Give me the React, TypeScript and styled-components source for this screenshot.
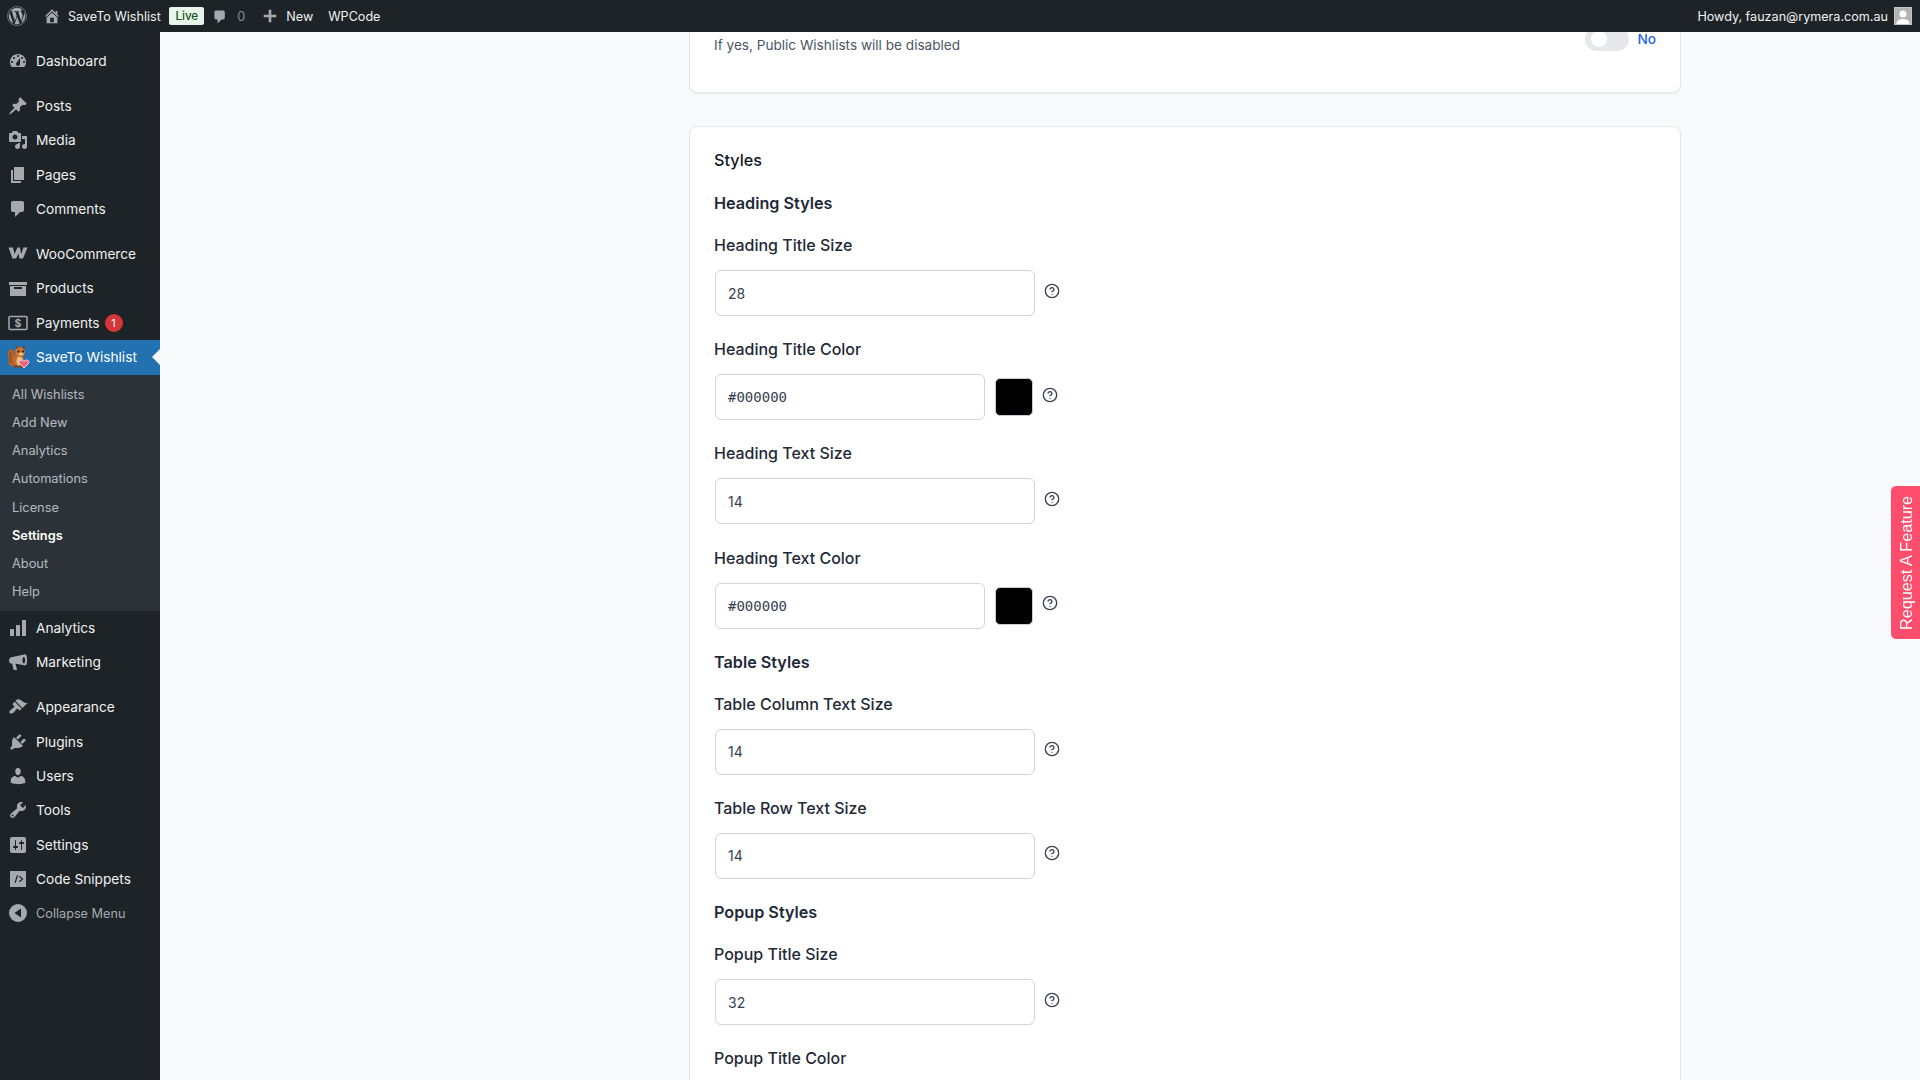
import { ReactNode } from 'react';
import styled, { createGlobalStyle } from 'styled-components';
import { FaWordpress } from 'react-icons/fa';
import { CircleHelp } from 'lucide-react';

const GlobalStyle = createGlobalStyle`
  html, body {
    margin: 0;
    padding: 0;
    height: 100%;
    overflow: hidden;
    background: #f9fafb;
    font-family: Inter, "Liberation Sans", sans-serif;
  }
  * {
    box-sizing: border-box;
  }
`;

const Page = styled.div`
  display: flex;
  flex-direction: column;
  height: 1080px;
  overflow: hidden;
`;

const AdminBar = styled.header`
  height: 32px;
  flex: none;
  background: #1d2327;
  color: #f0f0f1;
  display: flex;
  align-items: center;
  font-size: 12.6px;
  position: relative;
  z-index: 2;
`;

const BarLogo = styled.span`
  width: 20px;
  height: 20px;
  margin-left: 7px;
  color: #a7aaad;
  display: flex;
`;

const BarIcon = styled.span<{ $left: number; $size?: number }>`
  margin-left: ${(props) => props.$left}px;
  width: ${(props) => props.$size || 16}px;
  height: ${(props) => props.$size || 16}px;
  color: #a7aaad;
  display: flex;
  flex: none;
`;

const BarText = styled.span<{ $left: number; $muted?: boolean }>`
  margin-left: ${(props) => props.$left}px;
  color: ${(props) => (props.$muted ? '#8c8f94' : '#f0f0f1')};
  white-space: nowrap;
`;

const LiveBadge = styled.span`
  margin-left: 8.5px;
  width: 35px;
  height: 18px;
  background: #e8f5e9;
  color: #14531a;
  border-radius: 2px;
  font-size: 11.6px;
  font-weight: 500;
  display: flex;
  align-items: center;
  justify-content: center;
`;

const BarRight = styled.div`
  margin-left: auto;
  display: flex;
  align-items: center;
  gap: 6px;
  padding-right: 8px;
`;

const Avatar = styled.span`
  width: 18px;
  height: 18px;
  display: flex;
  background: #b4b4b4;
  border: 1px solid #c3c4c7;
  overflow: hidden;
`;

const Body = styled.div`
  flex: 1;
  display: flex;
  min-height: 0;
`;

const Sidebar = styled.nav`
  width: 160px;
  flex: none;
  background: #1d2327;
  padding-top: 12px;
`;

const MenuItem = styled.a<{ $active?: boolean; $gap?: number; $muted?: boolean }>`
  height: 34.3px;
  margin-top: ${(props) => props.$gap || 0}px;
  padding-bottom: 1px;
  display: flex;
  align-items: center;
  position: relative;
  font-size: ${(props) => (props.$muted ? 12.7 : 13.7)}px;
  color: ${(props) => (props.$active ? '#fff' : props.$muted ? '#a7aaad' : '#f0f0f1')};
  background: ${(props) => (props.$active ? '#2271b1' : 'transparent')};

  ${(props) =>
    props.$active &&
    `&::after {
      content: '';
      position: absolute;
      right: 0;
      top: 9px;
      border: 8px solid transparent;
      border-right-color: #f9fafb;
    }`}
`;

const MenuIcon = styled.span`
  width: 36px;
  flex: none;
  display: flex;
  justify-content: center;
  color: #a7aaad;
`;

const CountBadge = styled.span`
  width: 18px;
  height: 18px;
  margin-left: 5px;
  border-radius: 50%;
  background: #d63638;
  color: #fff;
  font-size: 11px;
  display: flex;
  align-items: center;
  justify-content: center;
`;

const SubMenu = styled.div`
  background: #2c3338;
  padding: 6px 0 5px;
`;

const SubItem = styled.a<{ $current?: boolean }>`
  height: 28.2px;
  padding-left: 12px;
  padding-bottom: 1px;
  display: flex;
  align-items: center;
  font-size: 12.8px;
  color: ${(props) => (props.$current ? '#fff' : 'rgba(240, 246, 252, 0.7)')};
  font-weight: ${(props) => (props.$current ? 600 : 400)};
`;

const Main = styled.main`
  flex: 1;
  min-width: 0;
  overflow: hidden;
  padding-left: 529px;
`;

const Card = styled.section`
  width: 992px;
  background: #fff;
  border: 1px solid #e5e7eb;
  border-radius: 8px;
  box-shadow: 0 1px 2px rgba(0, 0, 0, 0.05);
`;

const TopCard = styled(Card)`
  height: 81px;
  margin-top: -20px;
  margin-bottom: 33px;
  padding: 21px 24px 0;
  display: flex;
  justify-content: space-between;
`;

const Hint = styled.p`
  margin: 0;
  font-size: 13.6px;
  line-height: 22px;
  color: #4b5563;
`;

const ToggleGroup = styled.div`
  display: flex;
  align-items: center;
  gap: 8px;
  height: 24px;
  margin-top: -7px;
`;

const ToggleTrack = styled.span`
  width: 44px;
  height: 24px;
  border-radius: 12px;
  background: #e5e7eb;
  display: flex;
  align-items: center;
  padding-left: 6px;
`;

const ToggleKnob = styled.span`
  width: 16px;
  height: 16px;
  border-radius: 50%;
  background: #fff;
`;

const ToggleLabel = styled.span`
  font-size: 13.7px;
  font-weight: 500;
  color: #2563eb;
`;

const StylesCard = styled(Card)`
  padding: 23px 24px 60px;
`;

const CardTitle = styled.h2`
  margin: 0 0 23px;
  font-size: 16.2px;
  line-height: 20px;
  font-weight: 500;
  color: #111827;
`;

const SectionTitle = styled.h3`
  margin: 0 0 22px;
  font-size: 16.2px;
  line-height: 20px;
  font-weight: 600;
  color: #1f2937;
`;

const Field = styled.div`
  margin-bottom: 23.2px;
`;

const FieldLabel = styled.label`
  display: block;
  margin-bottom: 15px;
  font-size: 16px;
  line-height: 20px;
  font-weight: 500;
  color: #1f2937;
`;

const FieldRow = styled.div`
  display: flex;
  align-items: center;
`;

const TextInput = styled.input<{ $mono?: boolean }>`
  width: ${(props) => (props.$mono ? 270 : 320)}px;
  height: 46px;
  margin-left: 1px;
  padding: 0 12px;
  background: #fff;
  border: 1px solid #d1d5db;
  border-radius: 6px;
  outline: none;
  color: #374151;
  font-size: 14px;
  font-family: ${(props) =>
    props.$mono ? '"DejaVu Sans Mono", monospace' : 'Inter, sans-serif'};
`;

const Swatch = styled.span`
  width: 38px;
  height: 38px;
  margin-left: 10px;
  background: #000;
  border: 1px solid #c8ccd4;
  border-radius: 5px;
  flex: none;
`;

const HelpIcon = styled(CircleHelp)`
  width: 16px;
  height: 16px;
  margin-left: 9px;
  margin-top: -5px;
  color: #374151;
  flex: none;
`;

const FeatureTab = styled.a`
  position: fixed;
  right: 0;
  top: 486px;
  width: 29px;
  height: 153px;
  padding-right: 2px;
  background: #ff4d6d;
  color: #fff;
  border-radius: 0 5px 5px 0;
  font-family: "Liberation Sans", Arial, sans-serif;
  font-size: 16.2px;
  display: flex;
  align-items: center;
  justify-content: center;
  writing-mode: vertical-rl;
  transform: rotate(180deg);
`;

const Dash = ({ d, size = 20 }: { d: string; size?: number }) => (
  <svg width={size} height={size} viewBox="0 0 20 20" fill="currentColor">
    <path fillRule="evenodd" d={d} />
  </svg>
);

const icons: Record<string, string> = {
  home: 'M16 8.5l1.53 1.53-1.06 1.06L10 4.62l-6.47 6.47-1.06-1.06L10 2.5l4 4v-2h2v4zm-6-2.46l6 5.99V18H4v-5.97zM12 17v-5H8v5h4z',
  dashboard:
    'M3.76 16h12.48c1.1-1.37 1.76-3.11 1.76-5 0-4.42-3.58-8-8-8s-8 3.58-8 8c0 1.89.66 3.63 1.76 5zM10 4c.55 0 1 .45 1 1s-.45 1-1 1-1-.45-1-1 .45-1 1-1zM6 6c.55 0 1 .45 1 1s-.45 1-1 1-1-.45-1-1 .45-1 1-1zm8 0c.55 0 1 .45 1 1s-.45 1-1 1-1-.45-1-1 .45-1 1-1zm-5.37 5.55L12 7v6c0 1.1-.9 2-2 2s-2-.9-2-2c0-.57.24-1.08.63-1.45zM4 10c.55 0 1 .45 1 1s-.45 1-1 1-1-.45-1-1 .45-1 1-1zm12 0c.55 0 1 .45 1 1s-.45 1-1 1-1-.45-1-1 .45-1 1-1z',
  pin: 'M10.44 3.02l1.82-1.82 6.36 6.35-1.83 1.82c-1.05-.68-2.48-.57-3.41.36l-.75.75c-.92.93-1.04 2.35-.35 3.41l-1.83 1.82-2.41-2.41-2.8 2.79c-.42.42-3.38 2.71-3.8 2.29s1.86-3.39 2.28-3.81l2.79-2.79L4.1 9.36l1.83-1.82c1.05.69 2.48.57 3.41-.36l.75-.75c.93-.92 1.05-2.35.35-3.41z',
  media:
    'M13 11V4c0-.55-.45-1-1-1h-1.67L9 1H5L3.67 3H2c-.55 0-1 .45-1 1v7c0 .55.45 1 1 1h10c.55 0 1-.45 1-1zM7 4.5c1.38 0 2.5 1.12 2.5 2.5S8.38 9.5 7 9.5 4.5 8.38 4.5 7 5.62 4.5 7 4.5zM14 6h5v10.5c0 1.38-1.12 2.5-2.5 2.5S14 17.88 14 16.5s1.12-2.5 2.5-2.5c.17 0 .34.02.5.05V9h-3V6zm-4 8.05V13h2v3.5c0 1.38-1.12 2.5-2.5 2.5S7 17.88 7 16.5 8.12 14 9.5 14c.17 0 .34.02.5.05z',
  pages: 'M6 15V2h10v13H6zm-1 1h8v2H3V5h2v11z',
  comment:
    'M5 2h9c1.1 0 2 .9 2 2v7c0 1.1-.9 2-2 2h-2l-5 5v-5H5c-1.1 0-2-.9-2-2V4c0-1.1.9-2 2-2z',
  plus: 'M17 8.5v3h-5.5V17h-3v-5.5H3v-3h5.5V3h3v5.5H17z',
  woo: 'M.5 3.5H5L6.500 10l3-6.500H12l1 6.500 2.500-6.500h4L15 14.500h-3.500l-1-5-2.500 5H4.500z',
  archive: 'M19 4v3H1V4h18zM2 8h16v10H2V8zm12 3V9H6v2h8z',
  chart: 'M2 11h4v7H2v-7zm6-4h4v11H8V7zm6-5h4v16h-4V2z',
  megaphone:
    'M17.500 2.200c.6-.2 1.500 2 1.600 5.400.1 3.300-.6 5.900-1.300 5.800L8 11.800h-.6l1.600 5.500c.1.4-.1.7-.5.7H6.200c-.3 0-.6-.2-.7-.6L4.200 11.800c-1.700 0-3.200-1.200-3.200-3.300C1 6.400 2.400 5 4.200 5zM15.800 5c-.8 0-1.300 1.400-1.300 3.200s.5 3.200 1.300 3.200 1.400-1.400 1.400-3.200S16.600 5 15.800 5z',
  brush:
    'M14.48 11.06L7.41 3.99l1.5-1.5c.5-.56 2.3-.47 3.51.32 1.21.8 1.43 1.28 2.91 2.1 1.18.64 2.45 1.26 4.45.85zm-.71.71L6.7 4.7 4.93 6.47c-.39.39-.39 1.02 0 1.41l1.06 1.06c.39.39.39 1.03 0 1.42-.6.6-1.43 1.11-2.21 1.69-.35.26-.7.53-1.01.84C1.43 13.23.91 15.34 1.75 16.18c.84.84 2.94.33 4.27-1.01.31-.31.58-.66.85-1.01.58-.78 1.08-1.61 1.69-2.21.39-.39 1.02-.39 1.41 0l1.06 1.06c.39.39 1.02.39 1.41 0z',
  plugin:
    'M13.11 4.36L9.87 7.6 8 5.73l3.24-3.24c.35-.34 1.05-.2 1.56.32.52.51.66 1.21.31 1.55zm-8 1.77l.91-1.12 9.01 9.01-1.19.84c-.71.71-2.63 1.16-3.82 1.16H6.14L4.9 17.26c-.59.59-1.54.59-2.12 0-.59-.58-.59-1.53 0-2.12l1.24-1.24v-3.88c0-1.13.4-3.19 1.09-3.89zm7.26 3.97l3.24-3.24c.34-.35 1.04-.21 1.55.31.52.51.66 1.21.31 1.55l-3.24 3.25z',
  users:
    'M10 9.25c-2.27 0-2.73-3.44-2.73-3.44C7 4.02 7.82 2 9.97 2c2.16 0 2.98 2.02 2.71 3.81 0 0-.41 3.44-2.68 3.44zm0 2.57L12.72 10c2.39 0 4.52 2.33 4.52 4.53v2.49s-3.65 1.13-7.24 1.13c-3.65 0-7.24-1.13-7.24-1.13v-2.49c0-2.25 1.94-4.48 4.47-4.48z',
  tools:
    'M16.68 9.77c-1.34 1.34-3.3 1.67-4.95.99l-5.41 6.52c-.99.99-2.59.99-3.58 0s-.99-2.59 0-3.57l6.52-5.42c-.68-1.65-.35-3.61.99-4.95 1.28-1.28 3.12-1.62 4.72-1.06l-2.89 2.89 2.82 2.82 2.86-2.87c.53 1.58.18 3.39-1.08 4.65zM3.81 16.21c.4.39 1.04.39 1.43 0 .4-.4.4-1.04 0-1.43-.39-.4-1.03-.4-1.43 0-.39.39-.39 1.03 0 1.43z',
  settings:
    'M18 16V4c0-1.1-.9-2-2-2H4c-1.1 0-2 .9-2 2v12c0 1.1.9 2 2 2h12c1.1 0 2-.9 2-2zM8 11h1c.55 0 1 .45 1 1s-.45 1-1 1H8v1.5c0 .28-.22.5-.5.5s-.5-.22-.5-.5V13H6c-.55 0-1-.45-1-1s.45-1 1-1h1V5.500c0-.28.22-.5.5-.5s.5.22.5.5V11zm5-2h-1c-.55 0-1-.45-1-1s.45-1 1-1h1V5.500c0-.28.22-.5.5-.5s.5.22.5.5V7h1c.55 0 1 .45 1 1s-.45 1-1 1h-1v5.500c0 .28-.22.5-.5.5s-.5-.22-.5-.5V9z',
  snippets:
    'M2 2h16v16H2V2zm6.900 4.200l-2.500 7.600h1.300l2.500-7.600H8.900zM11.800 6.800l-.8.9 2.600 2.300-2.600 2.300.8.900 3.600-3.200-3.600-3.200z',
  collapse: 'M10 1a9 9 0 1 1 0 18 9 9 0 0 1 0-18zm3 4.500L6.500 10l6.500 4.500v-9z',
};

const PaymentsIcon = () => (
  <svg width="20" height="20" viewBox="0 0 20 20">
    <rect x="1" y="3.500" width="18" height="13" rx="1" fill="none" stroke="currentColor" strokeWidth="1.500" />
    <text x="10" y="14" textAnchor="middle" fontSize="10.500" fontWeight="700" fontFamily="Inter, sans-serif" fill="currentColor">
      $
    </text>
  </svg>
);

const SquirrelIcon = () => (
  <svg width="24" height="24" viewBox="0 0 24 24">
    <path d="M7 5C3.500 3.500 1.500 6 2 10c.4 3 1 5 .5 7.500C2.300 20 4.500 22 8 21.500l3-1.500-2-8c-.5-3 .5-5-2-7z" fill="#b5602a" />
    <path d="M5 7c-1 1-1 3-.5 5 .4 2 .5 4 .5 6" stroke="#8a4419" strokeWidth="1" fill="none" />
    <ellipse cx="12.500" cy="15" rx="5.500" ry="6.500" fill="#c26c2f" />
    <ellipse cx="13.500" cy="16" rx="3" ry="4.500" fill="#efc084" />
    <circle cx="14" cy="7" r="5" fill="#c9742f" />
    <path d="M9.500 4l.5-3.500L13 2.500zM15.500 2.500l3-2 .5 4z" fill="#8a4419" />
    <circle cx="12.500" cy="6.500" r="1" fill="#24130a" />
    <circle cx="17" cy="6.500" r="1" fill="#24130a" />
    <ellipse cx="15" cy="9" rx="2.500" ry="1.500" fill="#efc084" />
    <path d="M8 20.500h4v2H8zM13 20.500h4v2h-4z" fill="#7a3f14" />
    <path
      d="M18 23l-4.300-4.300c-1.300-1.400-.4-3.700 1.500-3.700 1.200 0 2.100.5 2.800 1.400.7-.9 1.600-1.400 2.800-1.400 1.900 0 2.800 2.300 1.500 3.700z"
      fill="#f4607a"
      stroke="#fbd3da"
      strokeWidth="1"
    />
  </svg>
);

const AvatarFigure = () => (
  <svg width="16" height="16" viewBox="0 0 16 16" fill="#fff">
    <circle cx="8" cy="6" r="3.500" />
    <path d="M1.500 16c0-3.500 3-5 6.500-5s6.500 1.500 6.500 5z" />
  </svg>
);

interface NavEntry {
  label: string;
  icon: ReactNode;
  gap?: number;
}

const upperNav: NavEntry[] = [
  { label: 'Dashboard', icon: <Dash d={icons.dashboard} /> },
  { label: 'Posts', icon: <Dash d={icons.pin} />, gap: 11 },
  { label: 'Media', icon: <Dash d={icons.media} /> },
  { label: 'Pages', icon: <Dash d={icons.pages} /> },
  { label: 'Comments', icon: <Dash d={icons.comment} /> },
  { label: 'WooCommerce', icon: <Dash d={icons.woo} />, gap: 11 },
  { label: 'Products', icon: <Dash d={icons.archive} /> },
];

const lowerNav: NavEntry[] = [
  { label: 'Analytics', icon: <Dash d={icons.chart} /> },
  { label: 'Marketing', icon: <Dash d={icons.megaphone} /> },
  { label: 'Appearance', icon: <Dash d={icons.brush} />, gap: 11 },
  { label: 'Plugins', icon: <Dash d={icons.plugin} /> },
  { label: 'Users', icon: <Dash d={icons.users} /> },
  { label: 'Tools', icon: <Dash d={icons.tools} /> },
  { label: 'Settings', icon: <Dash d={icons.settings} /> },
  { label: 'Code Snippets', icon: <Dash d={icons.snippets} /> },
];

const subNav = ['All Wishlists', 'Add New', 'Analytics', 'Automations', 'License', 'Settings', 'About', 'Help'];

type Row =
  | { kind: 'section'; label: string }
  | { kind: 'size'; label: string; value: string }
  | { kind: 'color'; label: string; value: string };

const rows: Row[] = [
  { kind: 'section', label: 'Heading Styles' },
  { kind: 'size', label: 'Heading Title Size', value: '28' },
  { kind: 'color', label: 'Heading Title Color', value: '#000000' },
  { kind: 'size', label: 'Heading Text Size', value: '14' },
  { kind: 'color', label: 'Heading Text Color', value: '#000000' },
  { kind: 'section', label: 'Table Styles' },
  { kind: 'size', label: 'Table Column Text Size', value: '14' },
  { kind: 'size', label: 'Table Row Text Size', value: '14' },
  { kind: 'section', label: 'Popup Styles' },
  { kind: 'size', label: 'Popup Title Size', value: '32' },
  { kind: 'color', label: 'Popup Title Color', value: '#000000' },
];

function NavRow({ item }: { item: NavEntry }) {
  return (
    <MenuItem $gap={item.gap}>
      <MenuIcon>{item.icon}</MenuIcon>
      {item.label}
    </MenuItem>
  );
}

export default function App() {
  return (
    <Page>
      <GlobalStyle />
      <AdminBar>
        <BarLogo>
          <FaWordpress size={20} />
        </BarLogo>
        <BarIcon $left={16} $size={18}>
          <Dash d={icons.home} size={18} />
        </BarIcon>
        <BarText $left={7}>SaveTo Wishlist</BarText>
        <LiveBadge>Live</LiveBadge>
        <BarIcon $left={8}>
          <Dash d={icons.comment} size={18} />
        </BarIcon>
        <BarText $left={9} $muted>
          0
        </BarText>
        <BarIcon $left={16} $size={18}>
          <Dash d={icons.plus} size={18} />
        </BarIcon>
        <BarText $left={7}>New</BarText>
        <BarText $left={15}>WPCode</BarText>
        <BarRight>
          <BarText $left={0}>Howdy, fauzan@rymera.com.au</BarText>
          <Avatar>
            <AvatarFigure />
          </Avatar>
        </BarRight>
      </AdminBar>
      <Body>
        <Sidebar>
          {upperNav.map((item) => (
            <NavRow key={item.label} item={item} />
          ))}
          <MenuItem>
            <MenuIcon>
              <PaymentsIcon />
            </MenuIcon>
            Payments
            <CountBadge>1</CountBadge>
          </MenuItem>
          <MenuItem $active>
            <MenuIcon>
              <SquirrelIcon />
            </MenuIcon>
            SaveTo Wishlist
          </MenuItem>
          <SubMenu>
            {subNav.map((label) => (
              <SubItem key={label} $current={label === 'Settings'}>
                {label}
              </SubItem>
            ))}
          </SubMenu>
          {lowerNav.map((item) => (
            <NavRow key={item.label} item={item} />
          ))}
          <MenuItem $muted>
            <MenuIcon>
              <Dash d={icons.collapse} />
            </MenuIcon>
            Collapse Menu
          </MenuItem>
        </Sidebar>
        <Main>
          <TopCard>
            <Hint>If yes, Public Wishlists will be disabled</Hint>
            <ToggleGroup>
              <ToggleTrack>
                <ToggleKnob />
              </ToggleTrack>
              <ToggleLabel>No</ToggleLabel>
            </ToggleGroup>
          </TopCard>
          <StylesCard>
            <CardTitle>Styles</CardTitle>
            {rows.map((row) =>
              row.kind === 'section' ? (
                <SectionTitle key={row.label}>{row.label}</SectionTitle>
              ) : (
                <Field key={row.label}>
                  <FieldLabel>{row.label}</FieldLabel>
                  <FieldRow>
                    <TextInput readOnly value={row.value} $mono={row.kind === 'color'} />
                    {row.kind === 'color' && <Swatch />}
                    <HelpIcon />
                  </FieldRow>
                </Field>
              )
            )}
          </StylesCard>
        </Main>
      </Body>
      <FeatureTab>Request A Feature</FeatureTab>
    </Page>
  );
}
